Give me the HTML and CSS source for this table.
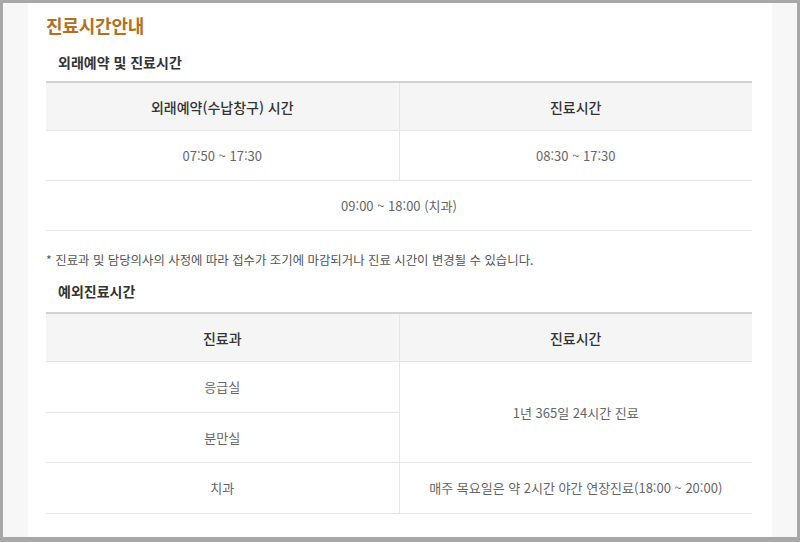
FILE: index.html
```html
<!DOCTYPE html>
<html lang="ko">
<head>
<meta charset="utf-8">
<link rel="stylesheet" href="styles.css">
</head>
<body>
<div class="frame">
  <div class="content">
    <h1 class="title">진료시간안내</h1>
    <h2 class="sub">외래예약 및 진료시간</h2>
    <table class="tbl">
      <thead>
        <tr><th>외래예약(수납창구) 시간</th><th>진료시간</th></tr>
      </thead>
      <tbody>
        <tr><td>07:50 ~ 17:30</td><td>08:30 ~ 17:30</td></tr>
        <tr><td colspan="2">09:00 ~ 18:00 (치과)</td></tr>
      </tbody>
    </table>
    <p class="note">* 진료과 및 담당의사의 사정에 따라 접수가 조기에 마감되거나 진료 시간이 변경될 수 있습니다.</p>
    <h2 class="sub sub2">예외진료시간</h2>
    <table class="tbl tbl2">
      <thead>
        <tr><th>진료과</th><th>진료시간</th></tr>
      </thead>
      <tbody>
        <tr><td>응급실</td><td rowspan="2">1년 365일 24시간 진료</td></tr>
        <tr><td>분만실</td></tr>
        <tr><td>치과</td><td>매주 목요일은 약 2시간 야간 연장진료(18:00 ~ 20:00)</td></tr>
      </tbody>
    </table>
  </div>
</div>
</body>
</html>
```
FILE: styles.css
```css
html, body {
  margin: 0;
  padding: 0;
}
body {
  font-family: "Noto Sans CJK KR", "Noto Sans", sans-serif;
  width: 800px;
  height: 542px;
  overflow: hidden;
}
.frame {
  box-sizing: border-box;
  width: 800px;
  height: 542px;
  border: 3px solid #a8a8a8;
  border-bottom-width: 5px;
  background: #f7f7f7;
  display: flex;
}
.content {
  margin-left: 25px;
  width: 744px;
  background: #fff;
  box-sizing: border-box;
  padding: 0 20px 0 18px;
}
.title {
  margin: 0;
  padding-top: 9px;
  font-size: 18px;
  line-height: 26px;
  font-weight: 700;
  color: #b2711f;
  letter-spacing: -0.2px;
}
.sub {
  margin: 0;
  padding: 14px 0 0 12px;
  height: 43px;
  box-sizing: border-box;
  font-size: 14px;
  line-height: 20px;
  font-weight: 700;
  color: #333;
}
.sub2 {
  padding-top: 11px;
  height: 42px;
}
.tbl {
  width: 706px;
  border-collapse: collapse;
  table-layout: fixed;
  border-top: 2px solid #d2d2d2;
}
.tbl th {
  background: #f5f5f5;
  height: 47px;
  padding: 0;
  font-size: 14px;
  font-weight: 500;
  color: #333;
  border-bottom: 1px solid #e6e6e6;
  border-left: 1px solid #e6e6e6;
}
.tbl td {
  height: 49px;
  padding: 0;
  text-align: center;
  font-size: 13px;
  color: #666;
  border-bottom: 1px solid #e6e6e6;
  border-left: 1px solid #e6e6e6;
}
.tbl2 td {
  height: 49.6px;
}
.tbl th:first-child,
.tbl tr > td:first-child {
  border-left: none;
}
.tbl td[rowspan] {
  border-left: 1px solid #e6e6e6;
}
.note {
  margin: 0;
  padding-top: 20px;
  height: 39px;
  box-sizing: border-box;
  font-size: 12.4px;
  line-height: 18px;
  color: #555;
}
```
